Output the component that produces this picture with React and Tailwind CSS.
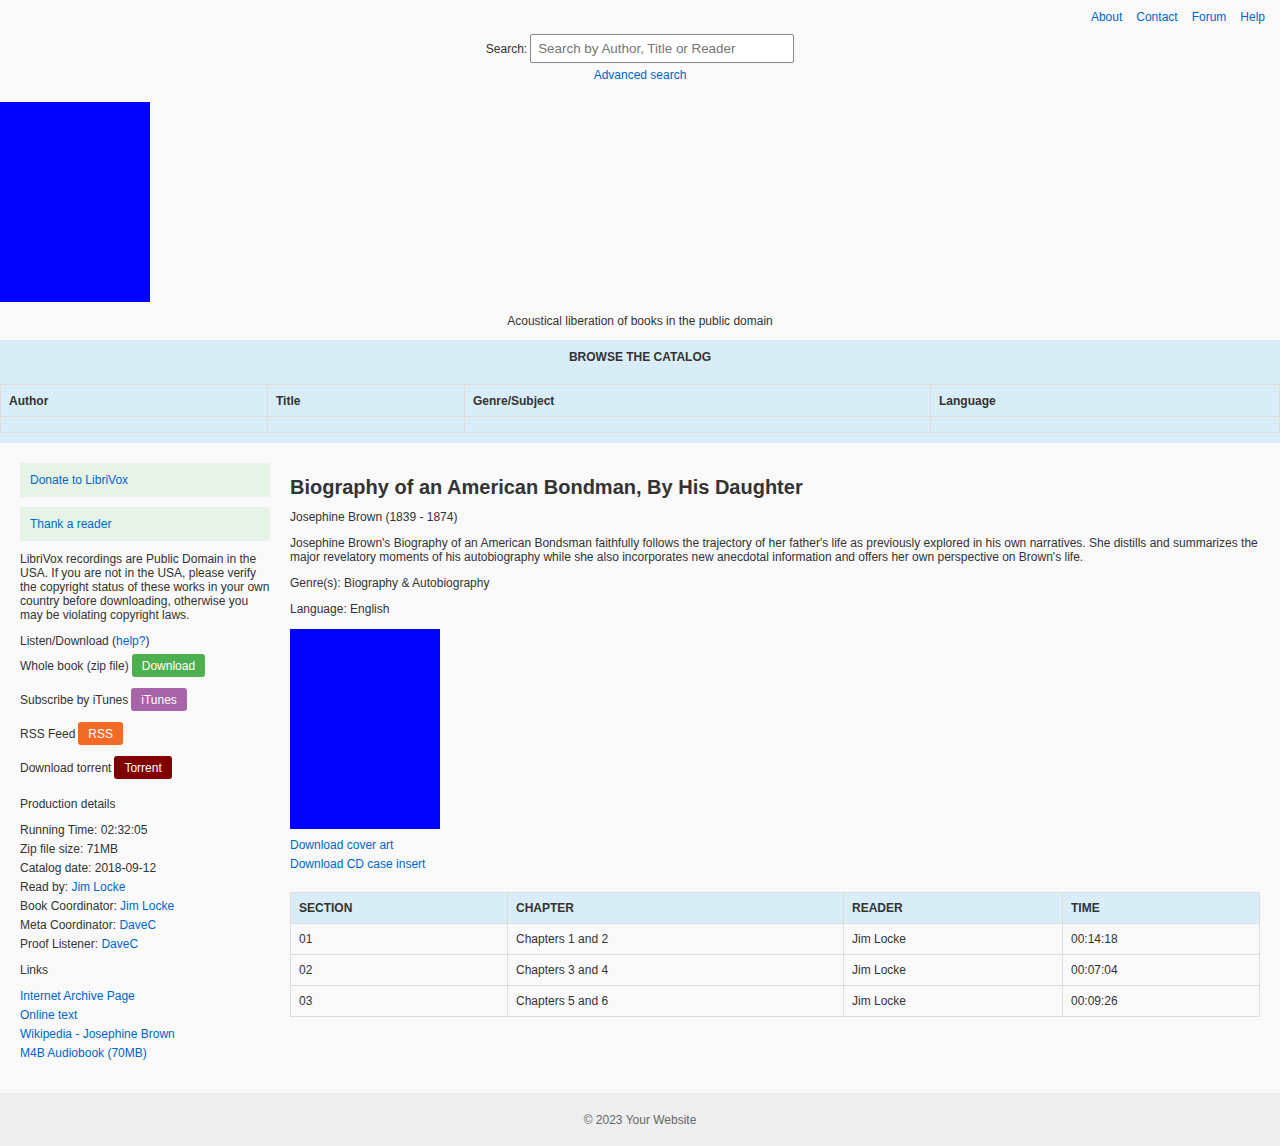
const font = { fontFamily: '"Liberation Sans", Arial, sans-serif' };

const navLinks = ["About", "Contact", "Forum", "Help"];

const sections = [
  { no: "01", chapter: "Chapters 1 and 2", reader: "Jim Locke", time: "00:14:18" },
  { no: "02", chapter: "Chapters 3 and 4", reader: "Jim Locke", time: "00:07:04" },
  { no: "03", chapter: "Chapters 5 and 6", reader: "Jim Locke", time: "00:09:26" },
];

const details = [
  ["Running Time: ", "02:32:05"],
  ["Zip file size: ", "71MB"],
  ["Catalog date: ", "2018-09-12"],
  ["Read by: ", "Jim Locke", true],
  ["Book Coordinator: ", "Jim Locke", true],
  ["Meta Coordinator: ", "DaveC", true],
  ["Proof Listener: ", "DaveC", true],
];

const links = [
  "Internet Archive Page",
  "Online text",
  "Wikipedia - Josephine Brown",
  "M4B Audiobook (70MB)",
];

function A({ children, className = "" }) {
  return (
    <a href="#" className={`text-[#0066cc] ${className}`}>
      {children}
    </a>
  );
}

function DlRow({ label, btn, color }) {
  return (
    <div className="flex items-center h-[23px] mt-[11px] first:mt-0">
      <span>{label}</span>
      <a
        href="#"
        className={`ml-[3px] h-[23px] px-[10px] flex items-center rounded-[3px] text-white ${color}`}
      >
        {btn}
      </a>
    </div>
  );
}

export default function App() {
  return (
    <div
      style={font}
      className="bg-[#f9f9f9] text-[#333] text-[12px] leading-[14px] min-h-[1146px] flex flex-col"
    >
      {/* header */}
      <header>
        <nav className="flex justify-end gap-[14px] pt-[10px] pr-[15px]">
          {navLinks.map((l) => (
            <A key={l}>{l}</A>
          ))}
        </nav>
        <div className="flex flex-col items-center mt-[10px]">
          <div className="flex items-center gap-[3px]">
            <label>Search:</label>
            <input
              type="text"
              placeholder="Search by Author, Title or Reader"
              className="w-[264px] h-[29px] border border-[#888] rounded-[2px] bg-white px-[7px] text-[13.4px] placeholder-[#757575] outline-none"
              style={font}
            />
          </div>
          <A className="mt-[5px]">Advanced search</A>
        </div>
        <div className="w-[150px] h-[200px] bg-[#0000ff] mt-[20px]" />
        <p className="text-center mt-[12px]">
          Acoustical liberation of books in the public domain
        </p>
      </header>

      {/* browse */}
      <section className="bg-[#d9edf7] mt-[12px] pt-[10px] pb-[10px]">
        <h3 className="text-center font-bold">BROWSE THE CATALOG</h3>
        <table className="w-full mt-[20px] border-collapse table-fixed">
          <colgroup>
            <col className="w-[267px]" />
            <col className="w-[197px]" />
            <col className="w-[466px]" />
            <col />
          </colgroup>
          <thead>
            <tr className="h-[32px]">
              {["Author", "Title", "Genre/Subject", "Language"].map((h) => (
                <th key={h} className="border border-[#ddd] px-[8px] text-left font-bold">
                  {h}
                </th>
              ))}
            </tr>
          </thead>
          <tbody>
            <tr className="h-[16px]">
              {[0, 1, 2, 3].map((i) => (
                <td key={i} className="border border-[#ddd] p-0" />
              ))}
            </tr>
          </tbody>
        </table>
      </section>

      {/* main */}
      <main className="flex gap-[20px] px-[20px] pt-[20px] pb-[30px] flex-1">
        <aside className="w-[250px] shrink-0">
          <div className="bg-[#e8f3e8] h-[34px] px-[10px] flex items-center">
            <A>Donate to LibriVox</A>
          </div>
          <div className="bg-[#e8f3e8] h-[34px] px-[10px] flex items-center mt-[10px]">
            <A>Thank a reader</A>
          </div>
          <p className="mt-[11px]">
            LibriVox recordings are Public Domain in the USA. If you are not in the USA,
            please verify the copyright status of these works in your own country before
            downloading, otherwise you may be violating copyright laws.
          </p>
          <p className="mt-[12px]">
            Listen/Download (<A>help?</A>)
          </p>
          <div className="mt-[6px]">
            <DlRow label="Whole book (zip file)" btn="Download" color="bg-[#4caf50]" />
            <DlRow label="Subscribe by iTunes" btn="iTunes" color="bg-[#a864a8]" />
            <DlRow label="RSS Feed" btn="RSS" color="bg-[#f26a26]" />
            <DlRow label="Download torrent" btn="Torrent" color="bg-[#800000]" />
          </div>
          <p className="mt-[18px]">Production details</p>
          <ul className="mt-[10px] leading-[19px]">
            {details.map(([k, v, link]) => (
              <li key={k}>
                {k}
                {link ? <A>{v}</A> : v}
              </li>
            ))}
          </ul>
          <p className="mt-[9px]">Links</p>
          <ul className="mt-[10px] leading-[19px]">
            {links.map((l) => (
              <li key={l}>
                <A>{l}</A>
              </li>
            ))}
          </ul>
        </aside>

        <div className="flex-1">
          <h1 className="text-[20px] leading-[24px] font-bold mt-[12px]">
            Biography of an American Bondman, By His Daughter
          </h1>
          <p className="mt-[11px]">Josephine Brown (1839 - 1874)</p>
          <p className="mt-[12px]">
            Josephine Brown's Biography of an American Bondsman faithfully follows the
            trajectory of her father's life as previously explored in his own narratives.
            She distills and summarizes the major revelatory moments of his autobiography
            while she also incorporates new anecdotal information and offers her own
            perspective on Brown's life.
          </p>
          <p className="mt-[12px]">Genre(s): Biography &amp; Autobiography</p>
          <p className="mt-[12px]">Language: English</p>
          <div className="w-[150px] h-[200px] bg-[#0000ff] mt-[13px]" />
          <div className="mt-[7px] leading-[19px] flex flex-col items-start">
            <A>Download cover art</A>
            <A>Download CD case insert</A>
          </div>
          <table className="w-full mt-[18px] border-collapse table-fixed">
            <colgroup>
              <col className="w-[217px]" />
              <col className="w-[336px]" />
              <col className="w-[219px]" />
              <col />
            </colgroup>
            <thead>
              <tr className="h-[31px] bg-[#d9edf7]">
                {["SECTION", "CHAPTER", "READER", "TIME"].map((h) => (
                  <th key={h} className="border border-[#ddd] px-[8px] text-left font-bold">
                    {h}
                  </th>
                ))}
              </tr>
            </thead>
            <tbody>
              {sections.map((s) => (
                <tr key={s.no} className="h-[31px]">
                  <td className="border border-[#ddd] px-[8px]">{s.no}</td>
                  <td className="border border-[#ddd] px-[8px]">{s.chapter}</td>
                  <td className="border border-[#ddd] px-[8px]">{s.reader}</td>
                  <td className="border border-[#ddd] px-[8px]">{s.time}</td>
                </tr>
              ))}
            </tbody>
          </table>
        </div>
      </main>

      <footer className="bg-[#eeeeee] h-[54px] flex items-center justify-center text-[#666]">
        © 2023 Your Website
      </footer>
    </div>
  );
}
